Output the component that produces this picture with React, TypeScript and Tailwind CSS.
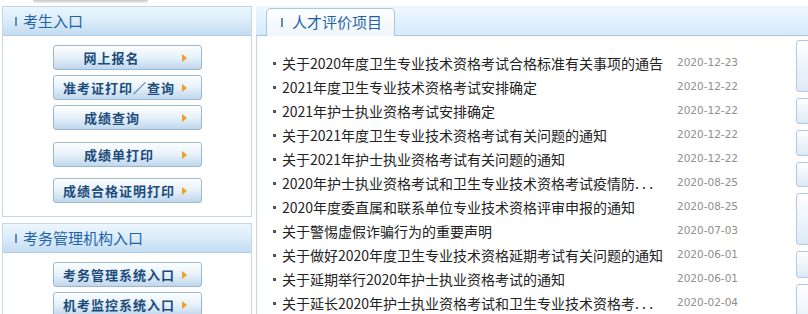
import React from 'react';

const CJK = { fontFamily: '"Noto Sans CJK SC", "Noto Sans", sans-serif' };

type Btn = { label: string; mt: string; shift?: string };

const examBtns: Btn[] = [
  { label: '网上报名', mt: 'mt-[9px]', shift: 'pr-[15px]' },
  { label: '准考证打印／查询', mt: 'mt-[5px]' },
  { label: '成绩查询', mt: 'mt-[5px]', shift: 'pr-[14px]' },
  { label: '成绩单打印', mt: 'mt-[12px]' },
  { label: '成绩合格证明打印', mt: 'mt-[11px]' },
];

const orgBtns: Btn[] = [
  { label: '考务管理系统入口', mt: 'mt-[9px]' },
  { label: '机考监控系统入口', mt: 'mt-[5px]' },
];

const news = [
  ['关于2020年度卫生专业技术资格考试合格标准有关事项的通告', '2020-12-23'],
  ['2021年度卫生专业技术资格考试安排确定', '2020-12-22'],
  ['2021年护士执业资格考试安排确定', '2020-12-22'],
  ['关于2021年度卫生专业技术资格考试有关问题的通知', '2020-12-22'],
  ['关于2021年护士执业资格考试有关问题的通知', '2020-12-22'],
  ['2020年护士执业资格考试和卫生专业技术资格考试疫情防. . .', '2020-08-25'],
  ['2020年度委直属和联系单位专业技术资格评审申报的通知', '2020-08-25'],
  ['关于警惕虚假诈骗行为的重要声明', '2020-07-03'],
  ['关于做好2020年度卫生专业技术资格延期考试有关问题的通知', '2020-06-01'],
  ['关于延期举行2020年护士执业资格考试的通知', '2020-06-01'],
  ['关于延长2020年护士执业资格考试和卫生专业技术资格考. . .', '2020-02-04'],
];

const sideBoxes = ['h-[52px]', 'h-[26px]', 'h-[26px]', 'h-[25px]', 'h-[52px]', 'h-[27px]', 'h-[52px]'];

function Arrow() {
  return (
    <svg width="5" height="8" viewBox="0 0 5 8" className="shrink-0">
      <path d="M0 0 L5 4 L0 8 Z" fill="#f0a020" />
    </svg>
  );
}

function EntryButton({ b }: { b: Btn }) {
  return (
    <div
      className={`${b.mt} mx-auto flex h-[25px] w-[149px] items-center rounded-[3px] border border-[#9bb8d2] bg-gradient-to-b from-[#fdfeff] via-[#e6f1fa] to-[#bfd7ec] shadow-[inset_0_1px_0_#ffffff]`}
    >
      <span
        className={`flex-1 pl-[6px] text-center text-[13px] font-bold tracking-[1px] text-[#1d4c7c] ${b.shift ?? ''}`}
        style={CJK}
      >
        {b.label}
      </span>
      <span className="mr-[14px] ml-[3px] flex">
        <Arrow />
      </span>
    </div>
  );
}

function PanelHeader({ title }: { title: string }) {
  return (
    <div className="flex h-[29px] items-center border-b border-[#b5cfe6] bg-gradient-to-b from-[#ebf6fe] via-[#dbecf9] to-[#c3dcf1] pl-[12px]">
      <span className="mr-[6px] h-[9px] w-[2px] bg-[#5f8db9]" />
      <span className="text-[15px] text-[#1f64a8]" style={CJK}>
        {title}
      </span>
    </div>
  );
}

export default function App() {
  return (
    <div className="h-[314px] w-[808px] overflow-hidden bg-white">
      <div className="h-[6px]">
        <div className="ml-[33px] h-[3px] w-[115px] rounded-b-[3px] bg-gradient-to-b from-[#c8c8c8] to-[#eeeeee]" />
      </div>
      <div className="flex">
        <div className="ml-[2px] w-[250px] shrink-0">
          <div className="h-[211px] border border-[#c3d7ea]">
            <PanelHeader title="考生入口" />
            {examBtns.map((b) => (
              <EntryButton key={b.label} b={b} />
            ))}
          </div>
          <div className="mt-[6px] h-[120px] border border-[#c3d7ea]">
            <PanelHeader title="考务管理机构入口" />
            {orgBtns.map((b) => (
              <EntryButton key={b.label} b={b} />
            ))}
          </div>
        </div>

        <div className="ml-[4px] w-[560px] shrink-0">
          <div className="flex h-[30px] items-end border-b border-[#a9c7e2] bg-gradient-to-b from-[#eef8ff] to-[#d6eaf9] pl-[10px]">
            <div className="-mb-px flex h-[28px] w-[129px] items-center rounded-t-[5px] border border-b-0 border-[#a9c7e2] bg-gradient-to-b from-[#ffffff] to-[#eef6fc] pl-[14px]">
              <span className="mr-[9px] h-[9px] w-[2px] bg-[#5f8db9]" />
              <span className="text-[15px] text-[#1f64a8]" style={CJK}>
                人才评价项目
              </span>
            </div>
          </div>
          <div className="flex border-l border-[#c3d7ea]">
            <div className="flex-1 pt-[15px]">
              {news.map(([t, d]) => (
                <div key={t} className="flex h-[24px] items-center">
                  <span className="ml-[16px] mr-[6px] h-[3px] w-[3px] shrink-0 bg-[#555555]" />
                  <span className="w-[395px] shrink-0 truncate text-[14px] leading-[24px] text-[#222222]" style={CJK}>
                    {t}
                  </span>
                  <span
                    className="text-[10.5px] text-[#8e8e8e]"
                    style={{ fontFamily: '"DejaVu Sans", Verdana, sans-serif' }}
                  >
                    {d}
                  </span>
                </div>
              ))}
            </div>
            <div className="mr-[4px] flex w-[16px] shrink-0 flex-col gap-[6px] pt-[4px]">
              {sideBoxes.map((h, i) => (
                <div
                  key={i}
                  className={`${h} rounded-[3px] border border-[#b3c9de] bg-gradient-to-b from-[#ffffff] to-[#dceaf6]`}
                />
              ))}
            </div>
          </div>
        </div>
      </div>
    </div>
  );
}
